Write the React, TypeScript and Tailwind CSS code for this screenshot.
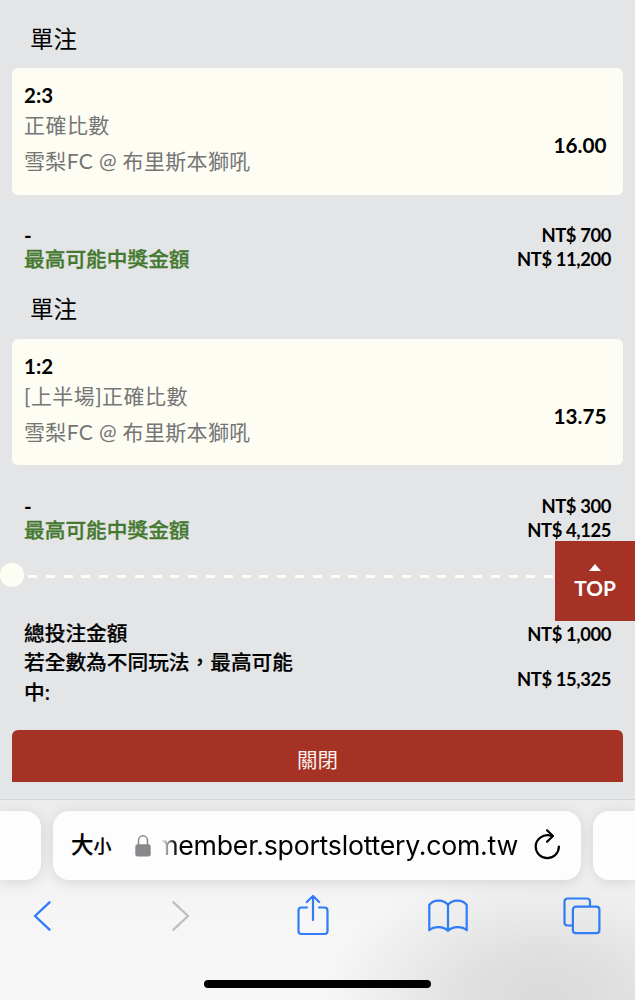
import React from 'react'

type Bet = {
  score: string
  market: string
  match: string
  odds: string
  stake: string
  payout: string
}

const bets: Bet[] = [
  { score: '2:3', market: '正確比數', match: '雪梨FC @ 布里斯本獅吼', odds: '16.00', stake: 'NT$ 700', payout: 'NT$ 11,200' },
  { score: '1:2', market: '[上半場]正確比數', match: '雪梨FC @ 布里斯本獅吼', odds: '13.75', stake: 'NT$ 300', payout: 'NT$ 4,125' },
]

function BetSlip({ bet }: { bet: Bet }) {
  return (
    <section className="h-[270.5px]">
      <h2 className="h-[68px] pl-[30px] pt-[8.5px] text-[23.5px] leading-[60px] font-normal">單注</h2>

      <div className="mx-3 flex h-[126.5px] rounded-md bg-[#fdfdf3] pl-3 pr-[16.5px]">
        <div className="flex-1 pt-[12.4px]">
          <div className="text-[20.5px] leading-[30px] font-bold">{bet.score}</div>
          <div className="text-[21px] leading-[30px] tracking-[0.45px] text-[#757575]">{bet.market}</div>
          <div className="mt-[5px] text-[21px] leading-[32px] tracking-[0.35px] text-[#757575]">{bet.match}</div>
        </div>
        <div className="pt-[62.4px] text-[20.7px] leading-[30px] font-bold">{bet.odds}</div>
      </div>

      <div className="flex justify-between px-6 pt-[28.9px]">
        <div className="text-[20.7px] leading-6 font-bold">
          <div>-</div>
          <div className="font-medium text-[#44792f] [-webkit-text-stroke:0.3px]">最高可能中獎金額</div>
        </div>
        <div className="text-right text-[18.4px] leading-6 font-bold tracking-[-0.4px]">
          <div>{bet.stake}</div>
          <div>{bet.payout}</div>
        </div>
      </div>
    </section>
  )
}

function Totals() {
  return (
    <div className="flex justify-between px-6 pt-[29.5px] font-medium">
      <div className="w-[280px] text-[20.7px] leading-[29.6px] [-webkit-text-stroke:0.2px]">
        <div>總投注金額</div>
        <div>若全數為不同玩法，最高可能</div>
        <div>中:</div>
      </div>
      <div className="pt-[1.5px] text-right text-[18.4px] leading-[29px] font-bold tracking-[-0.4px]">
        <div>NT$ 1,000</div>
        <div className="mt-4">NT$ 15,325</div>
      </div>
    </div>
  )
}

function AddressBar() {
  return (
    <div className="flex gap-3 pt-[11px]">
      <div className="h-[69px] w-[41px] shrink-0 rounded-r-2xl bg-[#fdfdfd] shadow-[0_2px_14px_rgba(0,0,0,0.12)]" />
      <div className="flex h-[69px] w-[528px] shrink-0 items-center rounded-2xl bg-[#fdfdfd] pl-[18px] shadow-[0_2px_14px_rgba(0,0,0,0.12)]">
        <div className="flex w-[64px] items-baseline font-medium leading-none [-webkit-text-stroke:0.2px]">
          <span className="text-[22.5px]">大</span>
          <span className="text-[18px]">小</span>
        </div>
        <svg className="h-[22px] w-4 shrink-0" viewBox="0 0 16 22" fill="none">
          <path d="M3.5 10V5.8a4.5 5 0 0 1 9 0V10" stroke="#88878c" strokeWidth="1.5" />
          <rect x="0.3" y="9.2" width="15.4" height="12.3" rx="2.2" fill="#88878c" />
        </svg>
        <div className="ml-[10px] flex w-[357px] shrink-0 justify-end overflow-hidden pb-px [mask-image:linear-gradient(to_right,transparent,black_16px)]">
          <span className="whitespace-nowrap font-[Inter,'Liberation_Sans',sans-serif] text-[26.7px] leading-10 tracking-[-0.25px]">
            member.sportslottery.com.tw
          </span>
        </div>
        <svg className="ml-[15px] mb-[3px] h-[32px] w-[28px] shrink-0" viewBox="0 0 28 32" fill="none" stroke="#000" strokeWidth="2.2" strokeLinecap="round" strokeLinejoin="round">
          <path d="M19 7.900C9.500 5.200 2.700 11.500 2.700 18.500a11.600 11.600 0 0 0 23.200 0" />
          <path d="M14 2.300l6 5.700-6 5.700" />
        </svg>
      </div>
      <div className="h-[69px] flex-1 rounded-l-2xl bg-[#fdfdfd] shadow-[0_2px_14px_rgba(0,0,0,0.12)]" />
    </div>
  )
}

function Toolbar() {
  return (
    <div className="flex h-[72px] items-center pl-[32px] text-[#2f7cf6]">
      <svg className="h-[44px] w-[20px]" viewBox="0 0 20 44" fill="none" stroke="currentColor" strokeWidth="2.4" strokeLinecap="round" strokeLinejoin="round">
        <path d="M17.500 8.300L3 22l14.500 13.700" />
      </svg>
      <svg className="ml-[119px] h-[44px] w-[20px] text-[#bfbfbf]" viewBox="0 0 20 44" fill="none" stroke="currentColor" strokeWidth="2.4" strokeLinecap="round" strokeLinejoin="round">
        <path d="M2.500 8.300L17 22L2.500 35.700" />
      </svg>
      <svg className="ml-[105px] h-[44px] w-[34px]" viewBox="0 0 34 44" fill="none" stroke="currentColor" strokeWidth="2.2" strokeLinecap="round" strokeLinejoin="round">
        <path d="M11 13.500H5.500a3 3 0 0 0-3 3V37a3 3 0 0 0 3 3h23a3 3 0 0 0 3-3V16.500a3 3 0 0 0-3-3H23" />
        <path d="M17 26V2.200M10.800 8L17 2l6.200 6" />
      </svg>
      <svg className="ml-[96.5px] h-[44px] w-[42px]" viewBox="0 0 42 44" fill="none" stroke="currentColor" strokeWidth="2.2" strokeLinecap="round" strokeLinejoin="round">
        <path d="M21 11C17 5.500 6.500 5 2.300 11v25.300c4.500-4.300 14-4.300 18.700 0.500c4.700-4.800 14.200-4.800 18.700-0.500V11C35.500 5 25 5.500 21 11zV37" />
      </svg>
      <svg className="ml-[93.5px] h-[44px] w-[39px]" viewBox="0 0 39 44" fill="none" stroke="currentColor" strokeWidth="2.2" strokeLinejoin="round">
        <path d="M10.500 31.500H5.500a3 3 0 0 1-3-3V7.500a3 3 0 0 1 3-3H25a3 3 0 0 1 3 3v5" />
        <rect x="10.900" y="12.700" width="26.500" height="26.500" rx="3" />
      </svg>
    </div>
  )
}

export default function App() {
  return (
    <main className="relative flex h-[1000px] w-[635px] flex-col overflow-hidden bg-[#e4e5e7] font-[Lato,'Noto_Sans_CJK_TC',sans-serif] text-black">
      <div className="h-[799px] shrink-0">
        {bets.map((bet) => (
          <BetSlip key={bet.score} bet={bet} />
        ))}

        {/* Ticket perforation */}
        <div className="flex h-[48px] items-center pt-[20px]">
          <div className="size-6 shrink-0 rounded-full bg-[#fdfdf3]" />
          <div className="ml-1 mt-[3px] h-[3.5px] flex-1 bg-[repeating-linear-gradient(to_right,#fdfdf3_0_9px,transparent_9px_17.8px)]" />
        </div>

        <Totals />

        <button className="mx-3 mt-[23.2px] block h-[52px] w-[611px] rounded-t-md bg-[#a63125] pt-[8px] text-[20.5px] text-[#fbefed]">
          關閉
        </button>
      </div>

      {/* Floating back-to-top button */}
      <button className="absolute right-0 top-[541px] flex h-[80px] w-[80px] flex-col items-center bg-[#a63125] pt-[23px] text-white">
        <svg className="h-[7px] w-3" viewBox="0 0 12 7" fill="currentColor">
          <path d="M6 0l6 7H0z" />
        </svg>
        <span className="mt-[3px] text-[20.8px] leading-[28px] font-bold">TOP</span>
      </button>

      <footer className="flex-1 border-t border-[#d4d5d7] bg-[radial-gradient(ellipse_220px_130px_at_545px_195px,#dadada,#e0e0e0_35%,transparent),linear-gradient(#ececed,#f6f6f6_60%,#f7f7f7)]">
        <AddressBar />
        <Toolbar />
        <div className="mx-auto mt-[28px] h-2 w-[227px] rounded-full bg-black" />
      </footer>
    </main>
  )
}
